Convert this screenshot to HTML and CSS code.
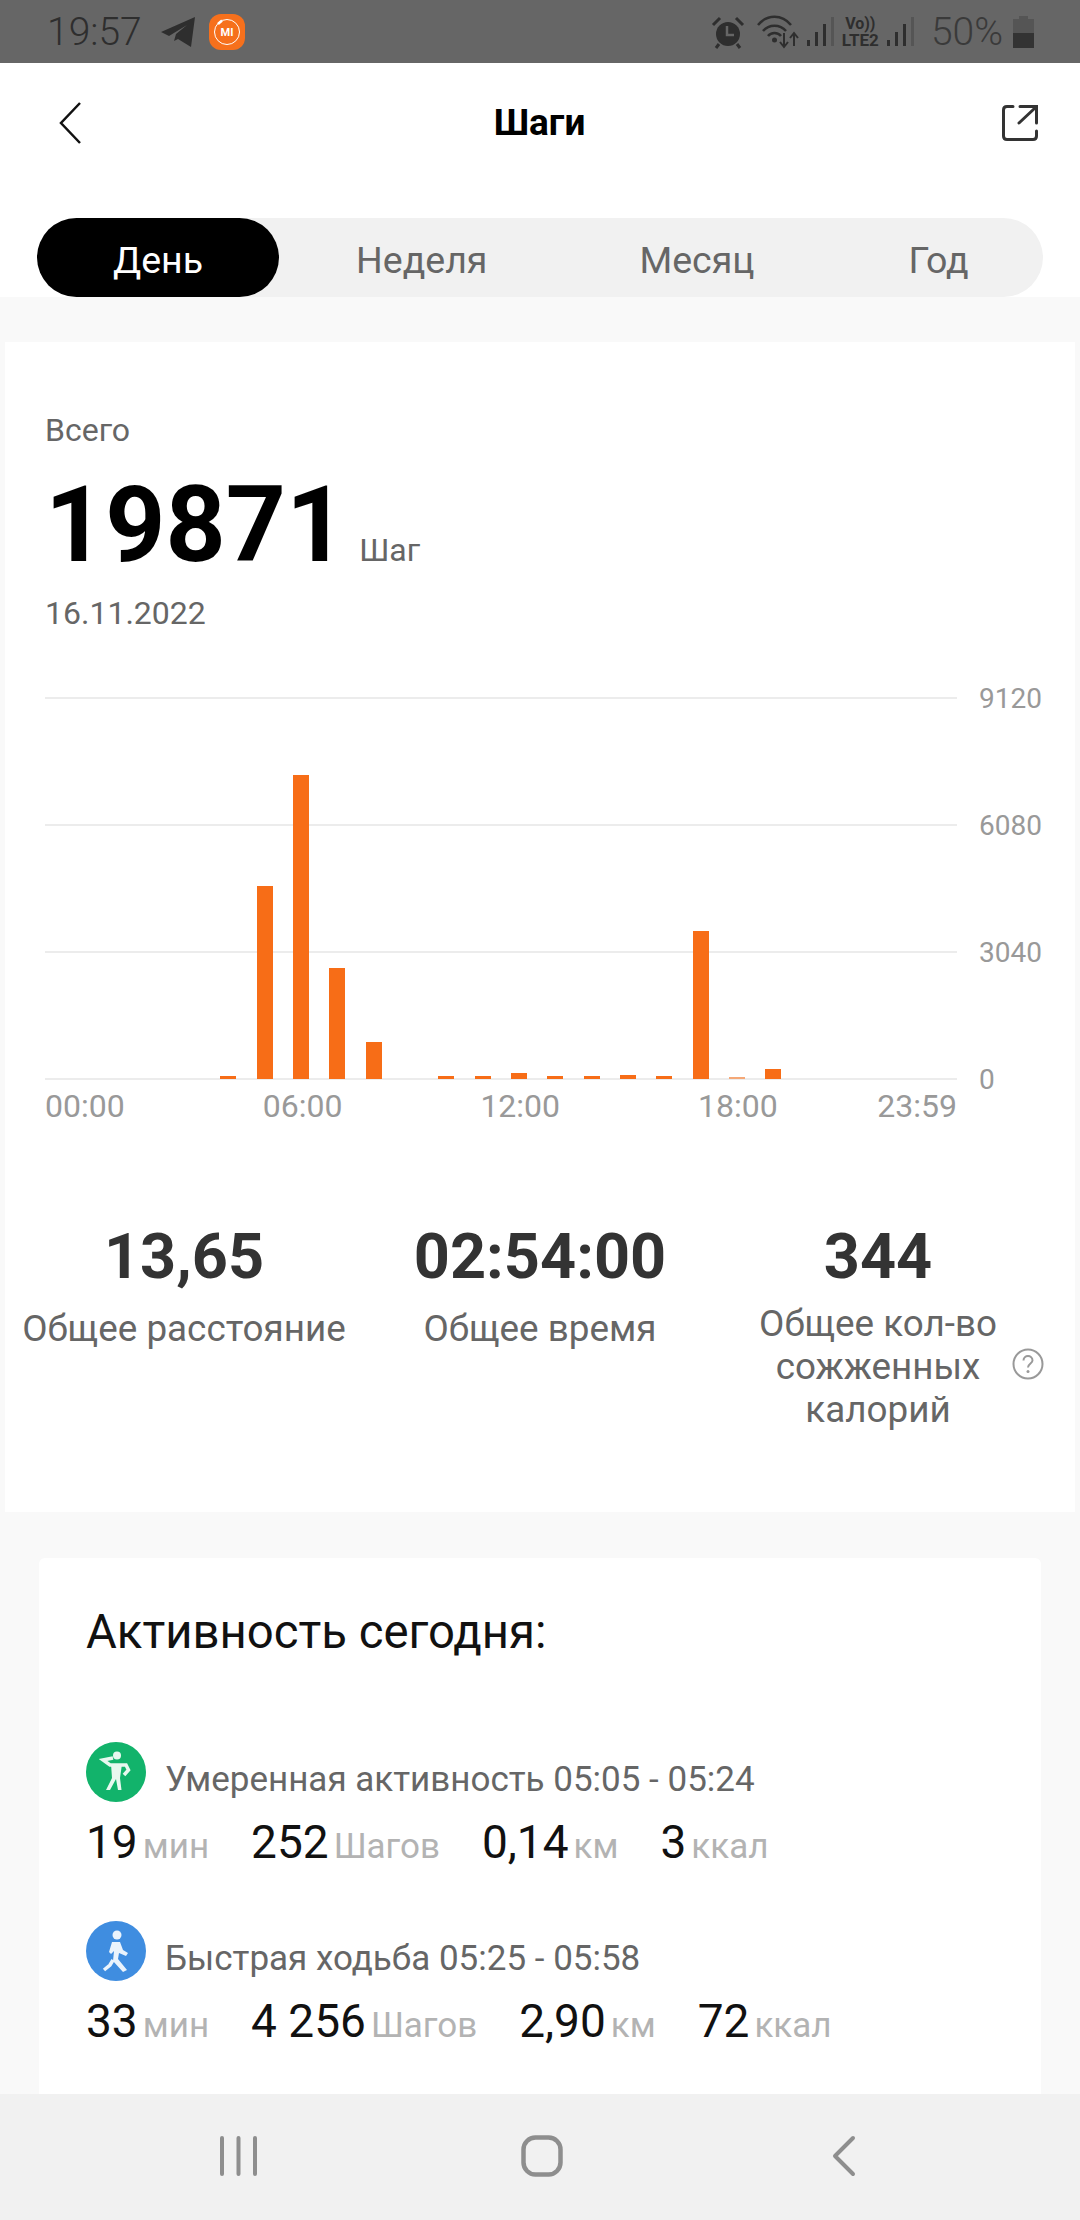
FILE: index.html
```html
<!DOCTYPE html>
<html lang="ru">
<head>
    <meta charset="UTF-8">
    <meta name="viewport" content="width=device-width, initial-scale=1.0">
    <title>Шаги</title>
    <link rel="stylesheet" href="styles.css">
</head>
<body>
    <div class="phone">
        <div class="statusbar">
            <div class="status-left">
                <span class="clock">19:57</span>
                <svg class="tg-icon" width="36" height="32" viewBox="0 0 36 32"><path d="M1 16 35 1 31 31 18 23 14 25 16 18 27 9 9 20Z" fill="#2e2e2e"/></svg>
                <svg class="mi-icon" width="36" height="36" viewBox="0 0 36 36">
                    <rect width="36" height="36" rx="12" fill="#f6701c"/>
                    <circle cx="18" cy="18" r="12.500" fill="none" stroke="#fff" stroke-width="1"/>
                    <path d="M13 6.500 9 10" stroke="#fff" stroke-width="2.500"/>
                    <text class="mi-text" x="18" y="22" text-anchor="middle">MI</text>
                </svg>
            </div>
            <div class="status-right">
                <svg class="alarm-icon" width="34" height="34" viewBox="0 0 34 34">
                    <circle cx="17" cy="19" r="12" fill="#2e2e2e"/>
                    <path d="M2 10 9 3M32 10 25 3M8 29 5 33M26 29 29 33" stroke="#2e2e2e" stroke-width="3"/>
                    <path d="M16 11V20H23" fill="none" stroke="#666" stroke-width="2.500"/>
                </svg>
                <svg width="42" height="34" viewBox="0 0 42 34">
                    <path d="M1 10C10 -1 25 -1 34 10M6 16C12 9 23 9 29 16M11 21C14 17 21 17 24 21" fill="none" stroke="#2e2e2e" stroke-width="2.500"/>
                    <circle cx="17.500" cy="25" r="2.500" fill="#2e2e2e"/>
                    <path d="M27 18V31M23 27 27 32 31 27M37 31V19M33 23 37 18 41 23" fill="none" stroke="#2e2e2e" stroke-width="2"/>
                </svg>
                <svg class="signal" width="27" height="29" viewBox="0 0 27 29">
                    <path d="M0 29V23H3V29ZM8 29V15H11V29ZM16 29V7H19V29Z" fill="#2e2e2e"/>
                    <path d="M24 29V0H27V29Z" fill="#555"/>
                </svg>
                <div class="volte"><span class="vo">Vo))</span><span>LTE2</span></div>
                <svg class="signal" width="27" height="29" viewBox="0 0 27 29">
                    <path d="M0 29V23H3V29ZM8 29V15H11V29ZM16 29V7H19V29Z" fill="#2e2e2e"/>
                    <path d="M24 29V0H27V29Z" fill="#555"/>
                </svg>
                <span class="battery-text">50%</span>
                <svg width="21" height="32" viewBox="0 0 21 32">
                    <path d="M6 0H15V3H21V32H0V3H6Z" fill="#555"/>
                    <path d="M0 17H21V32H0Z" fill="#333"/>
                </svg>
            </div>
        </div>

        <div class="page">
            <header class="topbar">
                <svg width="24" height="42" viewBox="0 0 24 42"><path d="M21 1 2 21 21 41" fill="none" stroke="#111" stroke-width="2.500"/></svg>
                <h1>Шаги</h1>
                <svg width="36" height="36" viewBox="0 0 36 36"><path d="M11 1.500H5Q1.500 1.500 1.500 5V31Q1.500 34.500 5 34.500H31Q34.500 34.500 34.500 31V26M17 18 33 3M18 1.500H34.500V18" fill="none" stroke="#333" stroke-width="3" stroke-linecap="round"/></svg>
            </header>

            <div class="tabs">
                <div class="tab tab-active">День</div>
                <div class="tab tab-week">Неделя</div>
                <div class="tab tab-month">Месяц</div>
                <div class="tab tab-year">Год</div>
            </div>

            <section class="summary">
                <div class="total-label">Всего</div>
                <div class="total">
                    <span class="total-value">19871</span>
                    <span class="total-unit">Шаг</span>
                </div>
                <div class="total-date">16.11.2022</div>

                <div class="chart">
                    <div class="plot-row">
                        <div class="plot">
                            <div class="gridlines"><i></i><i></i><i></i><i></i></div>
                            <div class="bars">
                                <span></span><span></span><span></span><span></span>
                                <span style="height:3px"></span>
                                <span style="height:193px"></span>
                                <span style="height:304px"></span>
                                <span style="height:111px"></span>
                                <span style="height:37px"></span>
                                <span></span>
                                <span style="height:3px"></span>
                                <span style="height:3px"></span>
                                <span style="height:6px"></span>
                                <span style="height:3px"></span>
                                <span style="height:3px"></span>
                                <span style="height:4px"></span>
                                <span style="height:3px"></span>
                                <span style="height:148px"></span>
                                <span class="bar-faint" style="height:2px"></span>
                                <span style="height:10px"></span>
                                <span></span><span></span><span></span><span></span>
                            </div>
                        </div>
                        <div class="y-labels"><span>9120</span><span>6080</span><span>3040</span><span>0</span></div>
                    </div>
                    <div class="x-labels"><span>00:00</span><span>06:00</span><span>12:00</span><span>18:00</span><span>23:59</span></div>
                </div>

                <div class="stats">
                    <div class="stat stat-distance">
                        <div class="stat-value">13,65</div>
                        <div class="stat-label">Общее расстояние</div>
                    </div>
                    <div class="stat stat-time">
                        <div class="stat-value">02:54:00</div>
                        <div class="stat-label">Общее время</div>
                    </div>
                    <div class="stat stat-calories">
                        <div class="stat-value">344</div>
                        <div class="stat-label stat-label-long">Общее кол-во сожженных калорий</div>
                        <svg class="help" width="32" height="32" viewBox="0 0 32 32">
                            <circle cx="16" cy="16" r="14.500" fill="none" stroke="#999" stroke-width="2"/>
                            <path d="M11.500 12.500C11.500 6.500 20.500 6.500 20.500 12.500C20.500 15.500 16 15.500 16 19.500" fill="none" stroke="#999" stroke-width="2"/>
                            <circle cx="16" cy="23.500" r="1.500" fill="#999"/>
                        </svg>
                    </div>
                </div>
            </section>

            <section class="activity">
                <h2>Активность сегодня:</h2>
                <div class="session">
                    <div class="session-head">
                        <svg width="60" height="60" viewBox="0 0 60 60">
                            <circle cx="30" cy="30" r="30" fill="#12b36b"/>
                            <circle cx="31" cy="13.500" r="4" fill="#e8f8ef"/>
                            <path d="M27 16 17 18 24 23H40L42.500 28 38 33" fill="none" stroke="#e8f8ef" stroke-width="3.500"/>
                            <path d="M25 22H36L34 36 35.500 48H32L30 37 24 48H20L26 36Z" fill="#e8f8ef"/>
                        </svg>
                        <span class="session-title">Умеренная активность 05:05 - 05:24</span>
                    </div>
                    <div class="session-nums">
                        <span class="num">19<small>мин</small></span>
                        <span class="num">252<small>Шагов</small></span>
                        <span class="num">0,14<small>км</small></span>
                        <span class="num">3<small>ккал</small></span>
                    </div>
                </div>
                <div class="session">
                    <div class="session-head">
                        <svg width="60" height="60" viewBox="0 0 60 60">
                            <circle cx="30" cy="30" r="30" fill="#3f8de0"/>
                            <circle cx="31" cy="14" r="4.500" fill="#eaf3fc"/>
                            <path d="M26 21 34 21 37 29 42 32 40 35 33 32 32 38 41 49 37 51 27 40 28 30 25 33 23 31Z" fill="#eaf3fc"/>
                            <path d="M27 39 24 44 18 49" fill="none" stroke="#eaf3fc" stroke-width="3.500"/>
                        </svg>
                        <span class="session-title">Быстрая ходьба 05:25 - 05:58</span>
                    </div>
                    <div class="session-nums">
                        <span class="num">33<small>мин</small></span>
                        <span class="num">4 256<small>Шагов</small></span>
                        <span class="num">2,90<small>км</small></span>
                        <span class="num">72<small>ккал</small></span>
                    </div>
                </div>
            </section>
        </div>

        <nav class="navbar">
            <svg width="37" height="42" viewBox="0 0 37 42"><path d="M2 3V39M18.500 3V39M35 3V39" stroke="#8e8e8e" stroke-width="4" stroke-linecap="round"/></svg>
            <svg class="nav-home" width="42" height="42" viewBox="0 0 42 42"><rect x="2.500" y="2.500" width="37" height="37" rx="12" fill="none" stroke="#8e8e8e" stroke-width="4.500"/></svg>
            <svg width="24" height="42" viewBox="0 0 24 42"><path d="M21 3 3 21 21 39" fill="none" stroke="#8e8e8e" stroke-width="4" stroke-linecap="round" stroke-linejoin="round"/></svg>
        </nav>
    </div>
</body>
</html>
```

FILE: styles.css
```css
* {
    box-sizing: border-box;
}
html, body {
    margin: 0;
    padding: 0;
}
body {
    font-family: Roboto, "Noto Sans", sans-serif;
    background-color: #f9f9f9;
}
.phone {
    width: 1080px;
    height: 2220px;
    display: flex;
    flex-direction: column;
    overflow: hidden;
}

/* status bar */
.statusbar {
    height: 63px;
    flex: none;
    background-color: #666;
    color: #2e2e2e;
    display: flex;
    justify-content: space-between;
    align-items: center;
    padding: 0 46px 0 47px;
}
.status-left, .status-right {
    display: flex;
    align-items: center;
}
.clock {
    font-size: 39px;
    font-weight: 300;
    margin-right: 18px;
}
.tg-icon {
    margin-right: 13px;
}
.mi-text {
    font-size: 11px;
    font-weight: 700;
    fill: #fff;
}
.status-right {
    gap: 8px;
}
.alarm-icon {
    margin-right: 4px;
}
.volte {
    display: flex;
    flex-direction: column;
    align-items: center;
    font-size: 17px;
    font-weight: 700;
    line-height: 16px;
}
.vo {
    font-size: 16px;
}
.battery-text {
    font-size: 39px;
    font-weight: 300;
    color: #3a3a3a;
    margin: 0 2px 0 9px;
}

.page {
    flex: 1;
    min-height: 0;
    overflow: hidden;
}

/* header */
.topbar {
    height: 155px;
    background-color: #fff;
    display: flex;
    justify-content: space-between;
    align-items: center;
    padding: 0 42px 36px 59px;
}
.topbar h1 {
    margin: 0 6px 0 0;
    font-size: 37px;
    font-weight: 700;
    color: #000;
}

/* tabs */
.tabs {
    position: relative;
    height: 79px;
    display: flex;
    background-color: #fff;
}
.tabs::before {
    content: "";
    position: absolute;
    top: 0;
    left: 37px;
    right: 37px;
    bottom: 0;
    border-radius: 40px;
    background-color: #f1f1f1;
}
.tab {
    position: relative;
    font-size: 37.500px;
    color: #666;
    line-height: 84px;
    text-align: center;
}
.tab-active {
    margin-left: 37px;
    width: 242px;
    height: 79px;
    border-radius: 40px;
    background-color: #000;
    color: #fff;
}
.tab-week {
    margin-left: 77px;
}
.tab-month {
    margin-left: 152px;
}
.tab-year {
    margin-left: 154px;
}

/* summary card */
.summary {
    margin: 45px 5px 0;
    padding: 69px 40px 0;
    height: 1170px;
    background-color: #fff;
}
.total-label {
    font-size: 32px;
    color: #666;
    line-height: 38px;
}
.total {
    display: flex;
    align-items: baseline;
    margin-top: 22px;
    height: 110px;
}
.total-value {
    font-size: 105px;
    font-weight: 700;
    color: #000;
    line-height: 110px;
}
.total-unit {
    font-size: 32px;
    color: #666;
    margin-left: 13px;
}
.total-date {
    font-size: 32px;
    color: #666;
    line-height: 38px;
    margin-top: 13px;
}

/* chart */
.chart {
    margin-top: 65px;
}
.plot-row {
    display: flex;
    gap: 22px;
}
.plot {
    position: relative;
    flex: none;
    width: 912px;
    height: 383px;
}
.gridlines {
    height: 100%;
    display: flex;
    flex-direction: column;
    justify-content: space-between;
}
.gridlines i {
    display: block;
    height: 2px;
    background-color: #ececec;
}
.bars {
    position: absolute;
    left: 20px;
    right: 20px;
    top: 0;
    bottom: 1px;
    display: grid;
    grid-template-columns: repeat(24, 1fr);
    justify-items: center;
    align-items: end;
}
.bars span {
    width: 16px;
    background-color: #f76d17;
}
.bars .bar-faint {
    background-color: #f5a877;
}
.y-labels {
    height: 383px;
    display: flex;
    flex-direction: column;
    justify-content: space-between;
    font-size: 28px;
    line-height: 2px;
    color: #999;
}
.y-labels span {
    height: 2px;
    padding-top: 1px;
}
.x-labels {
    width: 912px;
    margin-top: 7px;
    display: flex;
    font-size: 32px;
    line-height: 38px;
    color: #999;
}
.x-labels span {
    margin-left: 138px;
}
.x-labels span:first-child {
    margin-left: 0;
}
.x-labels span:last-child {
    margin-left: auto;
}

/* stats */
.stats {
    margin: 96px -40px 0;
    display: flex;
}
.stat {
    position: relative;
    text-align: center;
}
.stat-distance {
    width: 358px;
}
.stat-time {
    width: 354px;
}
.stat-calories {
    width: 322px;
}
.stat-value {
    font-size: 63px;
    font-weight: 700;
    color: #333;
    line-height: 72px;
}
.stat-label {
    font-size: 36.800px;
    line-height: 44px;
    color: #666;
    margin-top: 14px;
}
.stat-label-long {
    width: 260px;
    margin: 9px auto 0;
    line-height: 43px;
}
.help {
    position: absolute;
    top: 127px;
    right: -5px;
}

/* activity card */
.activity {
    margin: 46px 39px 0;
    padding: 44px 47px 0;
    height: 560px;
    background-color: #fff;
    border-radius: 6px;
}
.activity h2 {
    margin: 0 0 80px;
    font-size: 47.300px;
    font-weight: 400;
    color: #111;
    line-height: 60px;
}
.session {
    margin-bottom: 51px;
}
.session-head {
    display: flex;
    align-items: flex-end;
    gap: 19px;
    height: 60px;
}
.session-title {
    font-size: 35px;
    line-height: 44px;
    color: #666;
}
.session-nums {
    display: flex;
    gap: 42px;
    margin-top: 12px;
}
.num {
    font-size: 46px;
    color: #111;
    line-height: 56px;
}
.num small {
    font-size: 35px;
    line-height: 1;
    color: #b3b3b3;
    margin-left: 5px;
}

/* bottom nav */
.navbar {
    height: 126px;
    flex: none;
    background-color: #f1f1f1;
    display: flex;
    align-items: center;
    padding: 0 224px 2px 220px;
    justify-content: space-between;
}
.nav-home {
    margin-right: 6px;
}
```
